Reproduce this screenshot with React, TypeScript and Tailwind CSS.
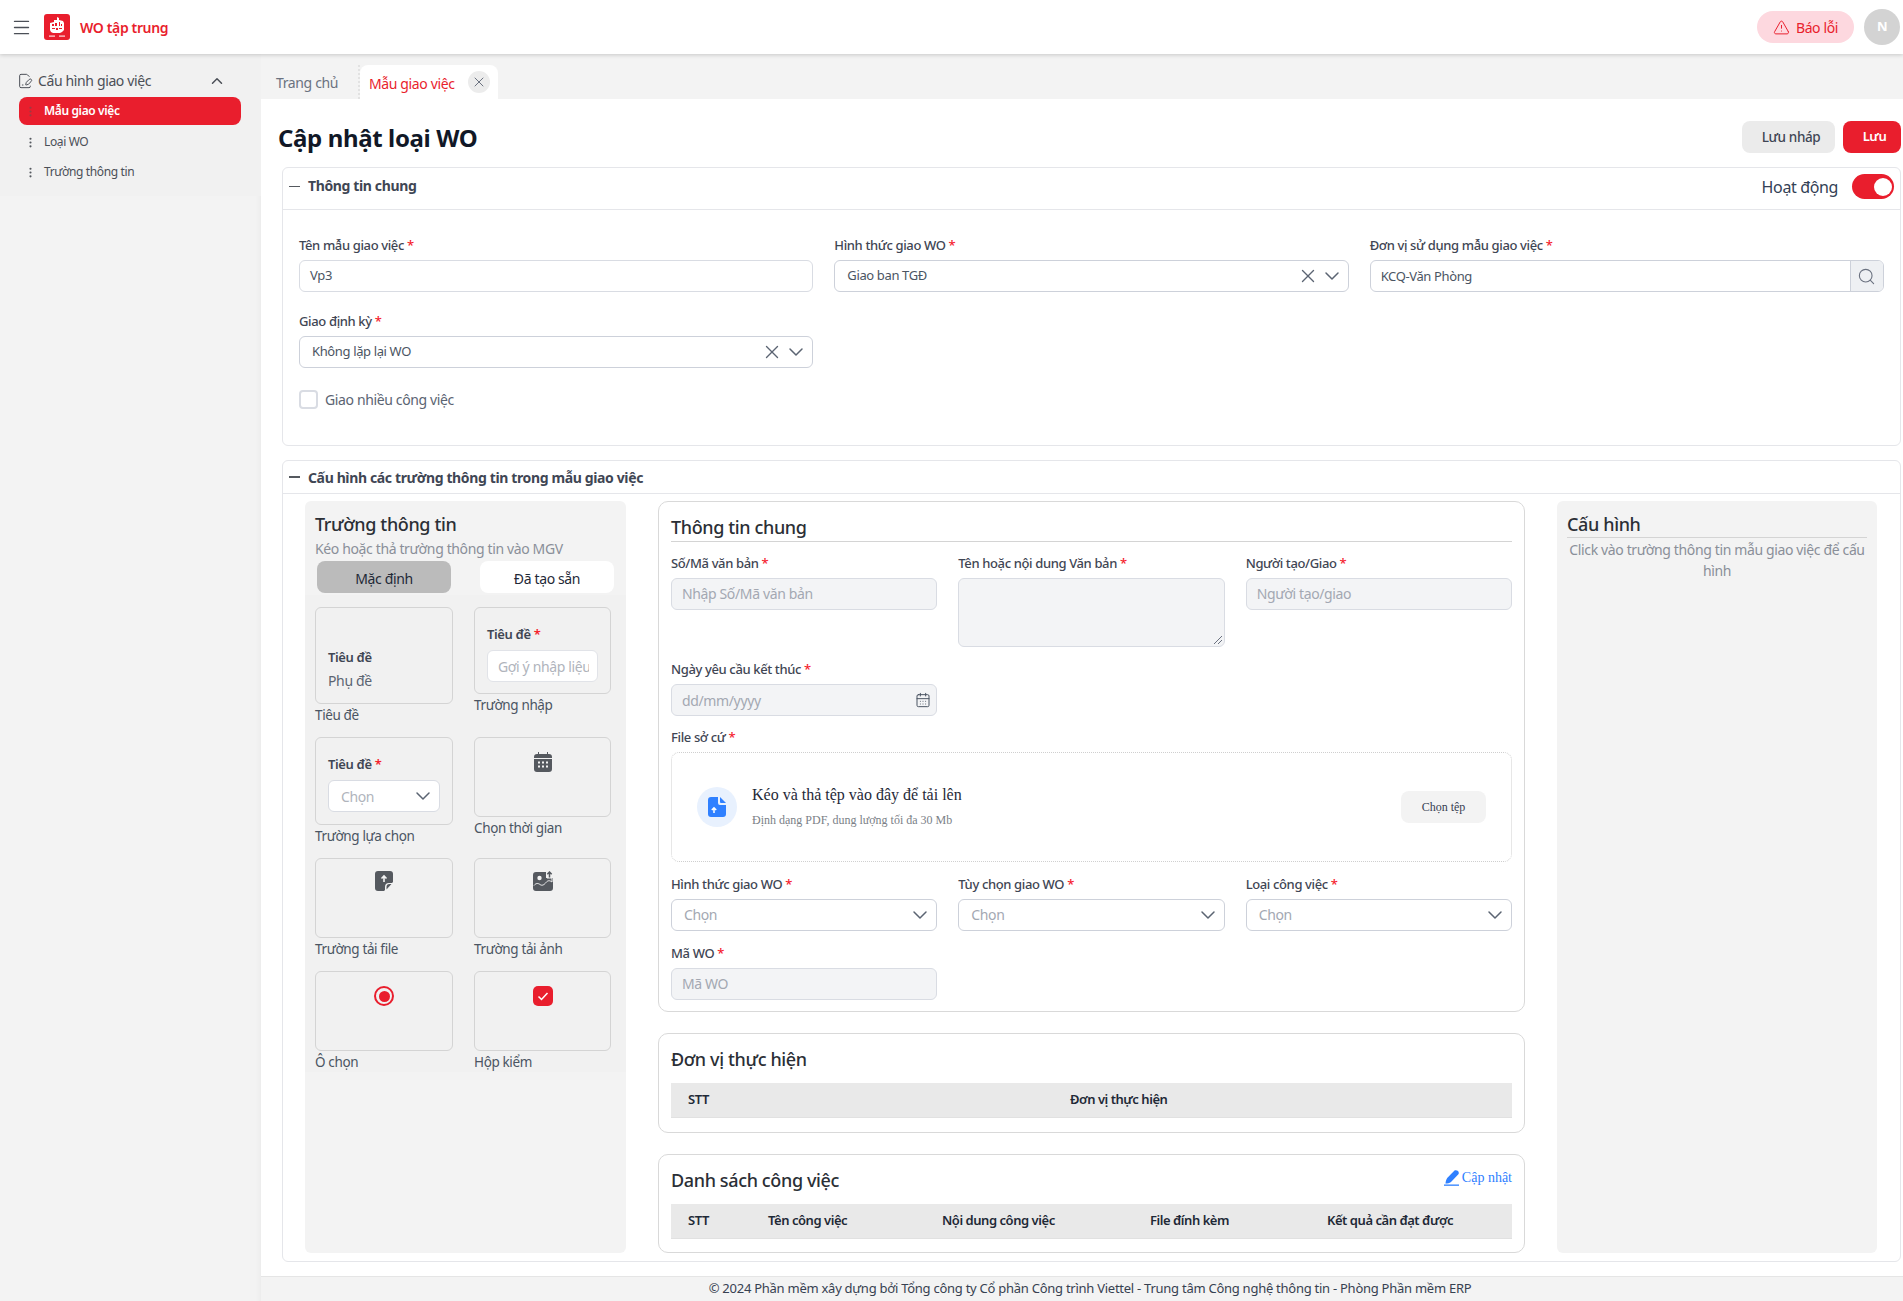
import { AlertTriangle, CalendarDays, ChevronDown, ChevronUp, EllipsisVertical, FilePenLine, Menu, Search, X } from 'lucide-react';
import type { ReactNode } from 'react';

const SERIF = "font-['Liberation_Serif','Times_New_Roman',serif] tracking-normal";

function Req() {
  return <span className="text-[#f5222d]"> *</span>;
}

function Label({ text }: { text: string }) {
  return (
    <div className="mb-[6px] text-[13px] leading-[18px] font-medium text-[#3f4654]">
      {text}
      <Req />
    </div>
  );
}

function Field({ value, disabled, placeholder }: { value?: string; disabled?: boolean; placeholder?: string }) {
  return (
    <div
      className={`flex h-8 items-center rounded-md border border-[#d9dce3] px-[10px] ${disabled ? 'bg-[#f3f4f6] pb-[1px] text-[14px] text-[#a3a8b2]' : 'bg-white text-[13px] text-[#4b5563]'}`}
    >
      {value ?? placeholder}
    </div>
  );
}

function SelectBox({ value, placeholder, clear }: { value?: string; placeholder?: string; clear?: boolean }) {
  return (
    <div className="flex h-8 items-center rounded-md border border-[#cdd1da] bg-white pr-[4px] pl-[12px]">
      <span className={`flex-1 ${value ? 'text-[13px] text-[#4b5563]' : 'pb-[1px] text-[14px] text-[#a3a8b2]'}`}>{value ?? placeholder}</span>
      {clear && <X className="mr-[1px] h-[22px] w-[22px] text-[#5b6472]" strokeWidth={1.5} />}
      <ChevronDown className="h-6 w-6 text-[#5b6472]" strokeWidth={1.5} />
    </div>
  );
}

function Logo() {
  return (
    <svg viewBox="0 0 26 26" className="h-[26px] w-[26px]">
      <rect width="26" height="26" rx="3" fill="#e91e2d" />
      <path d="M6 9l4-1V6h3V3l2 1v2l4 1 1 2v7l-2 2-2 1H9l-2-1-1-2z" fill="#fff" />
      <path d="M8 10h2v2H8zM11 9h2v3h-2zM15 8h1v4h-1zM17 10h1v2h-1zM8 14h3v1H8zM12 14h2v2h-2zM15 14h3v1h-3z" fill="#e91e2d" />
      <rect x="5" y="21.500" width="6" height="1.200" fill="#fff" opacity=".85" />
      <rect x="15" y="21.500" width="6" height="1.200" fill="#fff" opacity=".85" />
    </svg>
  );
}

function Sidebar() {
  return (
    <aside className="flex w-[261px] shrink-0 flex-col bg-[#f3f3f3] shadow-[inset_-6px_0_6px_-6px_rgba(0,0,0,0.06)]">
      <div className="h-[142px] bg-[#f1f1f1] pt-[13px] pr-[20px] pl-[19px]">
        <div className="flex h-[30px] items-center pb-[3px] text-[14px] text-[#4b4f57]">
          <FilePenLine className="mr-[5px] ml-[-2px] h-4 w-4" strokeWidth={1.5} />
          <span className="flex-1">Cấu hình giao việc</span>
          <ChevronUp className="mr-[15px] h-[18px] w-[18px]" strokeWidth={2} />
        </div>
        <div className="mb-[2px] flex h-[28px] items-center rounded-lg bg-[#e91e2d] pl-[5px] text-[12px] font-semibold text-white">
          <EllipsisVertical className="h-[13px] w-[13px] text-[#9b3b42]" />
          <span className="ml-[7px]">Mẫu giao việc</span>
        </div>
        {['Loại WO', 'Trường thông tin'].map((t) => (
          <div key={t} className="flex h-[30px] items-center pl-[5px] text-[12px] text-[#4b4f57]">
            <EllipsisVertical className="h-[13px] w-[13px] text-[#55595f]" />
            <span className="ml-[7px]">{t}</span>
          </div>
        ))}
      </div>
    </aside>
  );
}

function TabBar() {
  return (
    <div className="flex h-[45px] shrink-0 items-end bg-[#f3f3f3] pl-[7px]">
      <div className="flex h-[34px] w-[92px] items-center border-r-2 border-dotted border-[#e2e2e2] pl-[8px] text-[14px] text-[#6b7280]">
        Trang chủ
      </div>
      <div className="flex h-[34px] w-[138px] items-center rounded-t-lg bg-white pl-[9px] text-[14px] text-[#e91e2d]">
        <span className="flex-1 pt-[2px]">Mẫu giao việc</span>
        <span className="mr-[8px] flex h-[22px] w-[22px] items-center justify-center rounded-full bg-[#ececec]">
          <X className="h-4 w-4 text-[#6b7280]" strokeWidth={1.5} />
        </span>
      </div>
    </div>
  );
}

function PaletteItem({ label, boxClass, children }: { label: string; boxClass: string; children: ReactNode }) {
  return (
    <div>
      <div className={`rounded-md border border-[#d4d4d4] ${boxClass}`}>{children}</div>
      <div className="mt-[1px] text-[13.500px] leading-[20px] text-[#4b5563]">{label}</div>
    </div>
  );
}

function Palette() {
  return (
    <div className="flex w-[321px] shrink-0 flex-col rounded-md bg-[#f3f3f3]">
      <div className="pt-[11px] pl-[10px]">
        <div className="text-[18px] leading-[24px] font-medium text-[#2b2f36]">Trường thông tin</div>
        <div className="mt-[1px] text-[14px] leading-[24px] text-[#8a8f99]">Kéo hoặc thả trường thông tin vào MGV</div>
      </div>
      <div className="flex pl-[12px]">
        <div className="flex h-8 w-[134px] items-center justify-center rounded-lg bg-[#bbbbbb] pt-[3px] text-[14px] text-[#1f2937]">Mặc định</div>
        <div className="ml-[29px] flex h-8 w-[134px] items-center justify-center rounded-lg bg-white pt-[3px] text-[14px] text-[#1f2937]">Đã tạo sẵn</div>
      </div>
      <div className="mt-[2px] grid h-[477px] grid-cols-[138px_137px] content-start gap-x-[21px] bg-[#f1f1f1] pt-[12px] pl-[10px]">
        <PaletteItem label="Tiêu đề" boxClass="h-[97px]">
          <div className="pt-[37px] pl-[12px] text-[13px] leading-[24px]">
            <div className="font-semibold text-[#3f4654]">Tiêu đề</div>
            <div className="text-[14px] text-[#5b6472]">Phụ đề</div>
          </div>
        </PaletteItem>
        <PaletteItem label="Trường nhập" boxClass="h-[87px]">
          <div className="pt-[16px] pl-[12px] text-[13px]">
            <div className="leading-[20px] font-semibold text-[#3f4654]">
              Tiêu đề
              <Req />
            </div>
            <div className="mt-[6px] flex h-8 w-[111px] items-center overflow-hidden rounded-md border border-[#e1e3e8] bg-white pl-[10px] text-[14px] whitespace-nowrap text-[#b0b4bc]">
              <span className="w-[91px] overflow-hidden">Gợi ý nhập liệu</span>
            </div>
          </div>
        </PaletteItem>
        <PaletteItem label="Trường lựa chọn" boxClass="mt-[12px] h-[88px]">
          <div className="pt-[16px] pl-[12px] text-[13px]">
            <div className="leading-[20px] font-semibold text-[#3f4654]">
              Tiêu đề
              <Req />
            </div>
            <div className="mt-[6px] flex h-8 w-[112px] items-center rounded-md border border-[#d9dce3] bg-white pr-[4px] pl-[12px] text-[14px] text-[#b0b4bc]">
              <span className="flex-1">Chọn</span>
              <ChevronDown className="h-6 w-6 text-[#5b6472]" strokeWidth={1.5} />
            </div>
          </div>
        </PaletteItem>
        <PaletteItem label="Chọn thời gian" boxClass="mt-[12px] h-[80px]">
          <div className="flex justify-center pt-[14px]">
            <svg viewBox="0 0 18 20" className="h-[20px] w-[18px]" fill="#55595f">
              <path d="M4 0h1v2h8V0h1v2h1a3 3 0 0 1 3 3v1H0V5a3 3 0 0 1 3-3h1zM0 7h18v10a3 3 0 0 1-3 3H3a3 3 0 0 1-3-3z" />
              <g fill="#f3f3f3">
                <rect x="4" y="9.500" width="2" height="2" />
                <rect x="8" y="9.500" width="2" height="2" />
                <rect x="12" y="9.500" width="2" height="2" />
                <rect x="4" y="13.500" width="2" height="2" />
                <rect x="8" y="13.500" width="2" height="2" />
                <rect x="12" y="13.500" width="2" height="2" />
              </g>
            </svg>
          </div>
        </PaletteItem>
        <PaletteItem label="Trường tải file" boxClass="mt-[12px] h-[80px]">
          <div className="flex justify-center pt-[12px]">
            <svg viewBox="0 0 18 20" className="h-[20px] w-[18px]">
              <path d="M3 0h12a3 3 0 0 1 3 3v8l-9 9H3a3 3 0 0 1-3-3V3a3 3 0 0 1 3-3z" fill="#55595f" />
              <path d="M9 11V5M6.500 7.500 9 5l2.500 2.500" stroke="#f3f3f3" strokeWidth="1.600" fill="none" />
              <path d="M18 12l-7 8h-1v-4a4 4 0 0 1 4-4z" fill="#f3f3f3" />
              <path d="M16.500 13l-5 5.500V16a3 3 0 0 1 3-3z" fill="#55595f" />
            </svg>
          </div>
        </PaletteItem>
        <PaletteItem label="Trường tải ảnh" boxClass="mt-[12px] h-[80px]">
          <div className="flex justify-center pt-[12px]">
            <svg viewBox="0 0 20 20" className="h-[20px] w-[20px]">
              <path d="M3 1h10v6h7v10a3 3 0 0 1-3 3H3a3 3 0 0 1-3-3V4a3 3 0 0 1 3-3z" fill="#55595f" />
              <circle cx="6.500" cy="7" r="2.200" fill="#f3f3f3" />
              <path d="M1 14.500c2-2.500 4-2.500 6-1s4 .5 6-2 4-2 6-.5V7h-5V3" fill="none" stroke="#f3f3f3" strokeWidth="1" />
              <path d="M16.500 6.500V1M14.300 3.200 16.500 1l2.200 2.200" stroke="#55595f" strokeWidth="1.500" fill="none" />
            </svg>
          </div>
        </PaletteItem>
        <PaletteItem label="Ô chọn" boxClass="mt-[12px] h-[80px]">
          <div className="flex justify-center pt-[14px]">
            <span className="flex h-5 w-5 items-center justify-center rounded-full border-2 border-[#e91e2d]">
              <span className="h-[11px] w-[11px] rounded-full bg-[#e91e2d]" />
            </span>
          </div>
        </PaletteItem>
        <PaletteItem label="Hộp kiểm" boxClass="mt-[12px] h-[80px]">
          <div className="flex justify-center pt-[14px]">
            <span className="flex h-5 w-5 items-center justify-center rounded-[5px] bg-[#e91e2d]">
              <svg viewBox="0 0 12 12" className="h-3 w-3" fill="none" stroke="#fff" strokeWidth="1.500">
                <path d="M1.500 6.500 4.500 9.500 10.500 3" />
              </svg>
            </span>
          </div>
        </PaletteItem>
      </div>
    </div>
  );
}

function TableHead({ cols }: { cols: { t: string; w: string }[] }) {
  return (
    <div className="mt-[11px] flex h-[35px] items-center border-b border-[#e1e1e1] bg-[#e9e9e9] text-[13px] font-semibold tracking-[-0.035em] text-[#1f2937]">
      {cols.map((c) => (
        <div key={c.t} className={c.w}>
          {c.t}
        </div>
      ))}
    </div>
  );
}

function FormCard() {
  return (
    <div className="flex w-[867px] shrink-0 flex-col">
      <div className="h-[511px] rounded-[10px] border border-[#d9d9d9] px-[12px] pt-[13px]">
        <div className="border-b border-[#d4d4d4] pb-[1px] text-[18px] leading-[25px] font-medium text-[#2b2f36]">Thông tin chung</div>
        <div className="mt-[12px] grid grid-cols-3 gap-x-[21px]">
          <div>
            <Label text="Số/Mã văn bản" />
            <Field disabled placeholder="Nhập Số/Mã văn bản" />
          </div>
          <div>
            <Label text="Tên hoặc nội dung Văn bản" />
            <div className="relative h-[69px] rounded-md border border-[#d9dce3] bg-[#f3f4f6]">
              <svg viewBox="0 0 10 10" className="absolute right-[1px] bottom-[1px] h-[10px] w-[10px]" stroke="#6b7280" strokeWidth="1">
                <path d="M9 1 1 9M9 5 5 9" />
              </svg>
            </div>
          </div>
          <div>
            <Label text="Người tạo/Giao" />
            <Field disabled placeholder="Người tạo/giao" />
          </div>
        </div>
        <div className="mt-[13px] w-[266px]">
          <Label text="Ngày yêu cầu kết thúc" />
          <div className="flex h-8 items-center rounded-md border border-[#d9dce3] bg-[#f3f4f6] pr-[5px] pl-[10px] text-[14px] text-[#a3a8b2]">
            <span className="flex-1">dd/mm/yyyy</span>
            <CalendarDays className="h-4 w-4 text-[#4b5563]" strokeWidth={1.5} />
          </div>
        </div>
        <div className="mt-[12px]">
          <Label text="File sở cứ" />
          <div className="flex h-[110px] items-center rounded-lg border border-dotted border-[#cfcfcf] pr-[25px] pl-[25px]">
            <span className="flex h-10 w-10 items-center justify-center rounded-full bg-[#e8f1fe]">
              <svg viewBox="0 0 18 20" className="h-[20px] w-[18px]">
                <path d="M3 0h7v6a2 2 0 0 0 2 2h6v9a3 3 0 0 1-3 3H3a3 3 0 0 1-3-3V3a3 3 0 0 1 3-3z" fill="#2f80ff" />
                <path d="M12 0l6 6h-5a1 1 0 0 1-1-1z" fill="#2f80ff" />
                <path d="M6 16v-5M3.800 13 6 10.800 8.200 13" stroke="#fff" strokeWidth="1.500" fill="none" />
              </svg>
            </span>
            <div className={`ml-[15px] flex-1 ${SERIF}`}>
              <div className="text-[16px] leading-[24px] text-[#1f2937]">Kéo và thả tệp vào đây để tải lên</div>
              <div className="mt-[1px] text-[12px] leading-[24px] text-[#7b7f87]">Định dạng PDF, dung lượng tối đa 30 Mb</div>
            </div>
            <span className={`flex h-8 w-[85px] items-center justify-center rounded-lg bg-[#f3f3f3] text-[12px] text-[#374151] ${SERIF}`}>Chọn tệp</span>
          </div>
        </div>
        <div className="mt-[13px] grid grid-cols-3 gap-x-[21px]">
          <div>
            <Label text="Hình thức giao WO" />
            <SelectBox placeholder="Chọn" />
          </div>
          <div>
            <Label text="Tùy chọn giao WO" />
            <SelectBox placeholder="Chọn" />
          </div>
          <div>
            <Label text="Loại công việc" />
            <SelectBox placeholder="Chọn" />
          </div>
        </div>
        <div className="mt-[13px] w-[266px]">
          <Label text="Mã WO" />
          <Field disabled placeholder="Mã WO" />
        </div>
      </div>

      <div className="mt-[21px] h-[100px] rounded-[10px] border border-[#d9d9d9] px-[12px] pt-[13px]">
        <div className="text-[18px] leading-[25px] font-medium text-[#2b2f36]">Đơn vị thực hiện</div>
        <TableHead
          cols={[
            { t: 'STT', w: 'w-[399px] pl-[17px]' },
            { t: 'Đơn vị thực hiện', w: '' },
          ]}
        />
      </div>

      <div className="mt-[21px] h-[99px] rounded-[10px] border border-[#d9d9d9] px-[12px] pt-[13px]">
        <div className="flex items-start justify-between">
          <div className="text-[18px] leading-[25px] font-medium text-[#2b2f36]">Danh sách công việc</div>
          <div className={`flex items-center text-[14px] leading-[20px] text-[#2f80ff] ${SERIF}`}>
            <svg viewBox="0 0 16 16" className="mr-[2px] h-4 w-4" fill="#2f80ff">
              <path d="M10.500.5c1-.6 2.500-.4 3.500.6s1 2.200.4 3.200L7 12c-1.500 1-3.500 1.500-5.500 1.500.2-2 .7-4 1.700-5.500z" />
              <rect x="0" y="14.500" width="15" height="1.300" />
            </svg>
            Cập nhật
          </div>
        </div>
        <TableHead
          cols={[
            { t: 'STT', w: 'w-[97px] pl-[17px]' },
            { t: 'Tên công việc', w: 'w-[174px]' },
            { t: 'Nội dung công việc', w: 'w-[208px]' },
            { t: 'File đính kèm', w: 'w-[177px]' },
            { t: 'Kết quả cần đạt được', w: '' },
          ]}
        />
      </div>
    </div>
  );
}

export default function App() {
  return (
    <div className="flex h-[1301px] w-[1903px] flex-col overflow-hidden bg-white font-['Noto_Sans','Open_Sans',sans-serif] tracking-[-0.023em]">
      <header className="relative z-10 flex h-[54px] shrink-0 items-center bg-white pr-[3px] pl-[11px] shadow-[0_1px_4px_rgba(0,0,0,0.18)]">
        <Menu className="h-[21px] w-[21px] text-[#4b4f57]" strokeWidth={1.6} />
        <span className="ml-[12px]">
          <Logo />
        </span>
        <span className="ml-[10px] flex-1 text-[14px] font-semibold text-[#e91e2d]">WO tập trung</span>
        <div className="flex h-8 w-[97px] items-center justify-center rounded-full bg-[#fdd8df] text-[14px] text-[#e91e2d]">
          <AlertTriangle className="mr-[6px] h-[17px] w-[17px]" strokeWidth={1.4} />
          Báo lỗi
        </div>
        <div className="ml-[10px] flex h-9 w-9 items-center justify-center rounded-full bg-[#d3d3d3] text-[13px] font-bold text-white">N</div>
      </header>

      <div className="flex min-h-0 flex-1">
        <Sidebar />
        <main className="flex min-w-0 flex-1 flex-col">
          <TabBar />
          <div className="ml-[7px] flex min-h-0 flex-1 flex-col bg-white">
            <div className="flex h-[68px] shrink-0 items-center justify-between pr-[2px] pl-[10px]">
              <h1 className="pt-[10px] text-[24px] font-bold text-[#111827]">Cập nhật loại WO</h1>
              <div className="flex gap-2 pt-[8px]">
                <div className="flex h-8 w-[93px] items-center justify-center rounded-lg bg-[#ebebeb] pl-[5px] text-[13.500px] font-medium text-[#3f4654]">Lưu nháp</div>
                <div className="flex h-8 w-[58px] items-center justify-center rounded-lg bg-[#e91e2d] pl-[5px] text-[13px] font-semibold text-white">Lưu</div>
              </div>
            </div>

            <section className="ml-[14px] h-[279px] w-[1619px] shrink-0 rounded-md border border-[#e5e6ea]">
              <div className="flex h-[42px] items-center border-b border-[#e5e6ea] pr-[6px] pb-[4px] pl-[6px]">
                <span className="mr-[8px] h-[1.500px] w-[11px] bg-[#55595f]" />
                <span className="flex-1 pb-[2px] text-[14px] font-bold text-[#3f4654]">Thông tin chung</span>
                <span className="mr-[14px] text-[16px] text-[#334155]">Hoạt động</span>
                <span className="flex h-[25px] w-[42px] items-center justify-end rounded-full bg-[#e91e2d] pr-[2px]">
                  <span className="h-[18px] w-[18px] rounded-full bg-white" />
                </span>
              </div>
              <div className="px-[16px] pt-[26px]">
                <div className="grid grid-cols-3 gap-x-[21px]">
                  <div>
                    <Label text="Tên mẫu giao việc" />
                    <Field value="Vp3" />
                  </div>
                  <div>
                    <Label text="Hình thức giao WO" />
                    <SelectBox value="Giao ban TGĐ" clear />
                  </div>
                  <div>
                    <Label text="Đơn vị sử dụng mẫu giao việc" />
                    <div className="flex h-8 items-stretch overflow-hidden rounded-md border border-[#cdd1da] bg-white text-[13px] text-[#4b5563]">
                      <span className="flex flex-1 items-center px-[10px] pt-[1px]">KCQ-Văn Phòng</span>
                      <span className="flex w-[33px] items-center justify-center border-l border-[#cdd1da] bg-[#eef0f3]">
                        <Search className="h-[19px] w-[19px] text-[#6b7280]" strokeWidth={1.4} />
                      </span>
                    </div>
                  </div>
                </div>
                <div className="mt-[20px] w-[514px]">
                  <Label text="Giao định kỳ" />
                  <SelectBox value="Không lặp lại WO" clear />
                </div>
                <div className="mt-[21px] flex items-center text-[14px] text-[#5b6472]">
                  <span className="mr-[7px] h-[19px] w-[19px] rounded-[4px] border-2 border-[#d9dce3] bg-white" />
                  Giao nhiều công việc
                </div>
              </div>
            </section>

            <section className="mt-[14px] ml-[14px] h-[802px] w-[1619px] shrink-0 rounded-md border border-[#e5e6ea]">
              <div className="flex h-[33px] items-center border-b border-[#e5e6ea] pr-[6px] pl-[6px]">
                <span className="mr-[8px] h-[1.500px] w-[11px] bg-[#55595f]" />
                <span className="text-[14px] font-bold text-[#3f4654]">Cấu hình các trường thông tin trong mẫu giao việc</span>
              </div>
              <div className="flex pt-[7px] pl-[22px]">
                <Palette />
                <div className="ml-[32px]">
                  <FormCard />
                </div>
                <div className="ml-[32px] h-[752px] w-[320px] rounded-md bg-[#f3f3f3] px-[10px] pt-[10px]">
                  <div className="border-b border-[#d4d4d4] text-[18px] leading-[26px] font-medium text-[#2b2f36]">Cấu hình</div>
                  <div className="pt-[1px] text-center text-[14px] leading-[21px] text-[#8a8f99]">
                    Click vào trường thông tin mẫu giao việc để cấu hình
                  </div>
                </div>
              </div>
            </section>
          </div>
          <footer className="mt-auto flex h-[25px] shrink-0 items-center justify-center border-t border-[#e5e5e5] bg-[#f3f3f3] pl-[16px] text-[13px] tracking-[-0.02em] text-[#374151]">
            © 2024 Phần mềm xây dựng bởi Tổng công ty Cổ phần Công trình Viettel - Trung tâm Công nghệ thông tin - Phòng Phần mềm ERP
          </footer>
        </main>
      </div>
    </div>
  );
}
